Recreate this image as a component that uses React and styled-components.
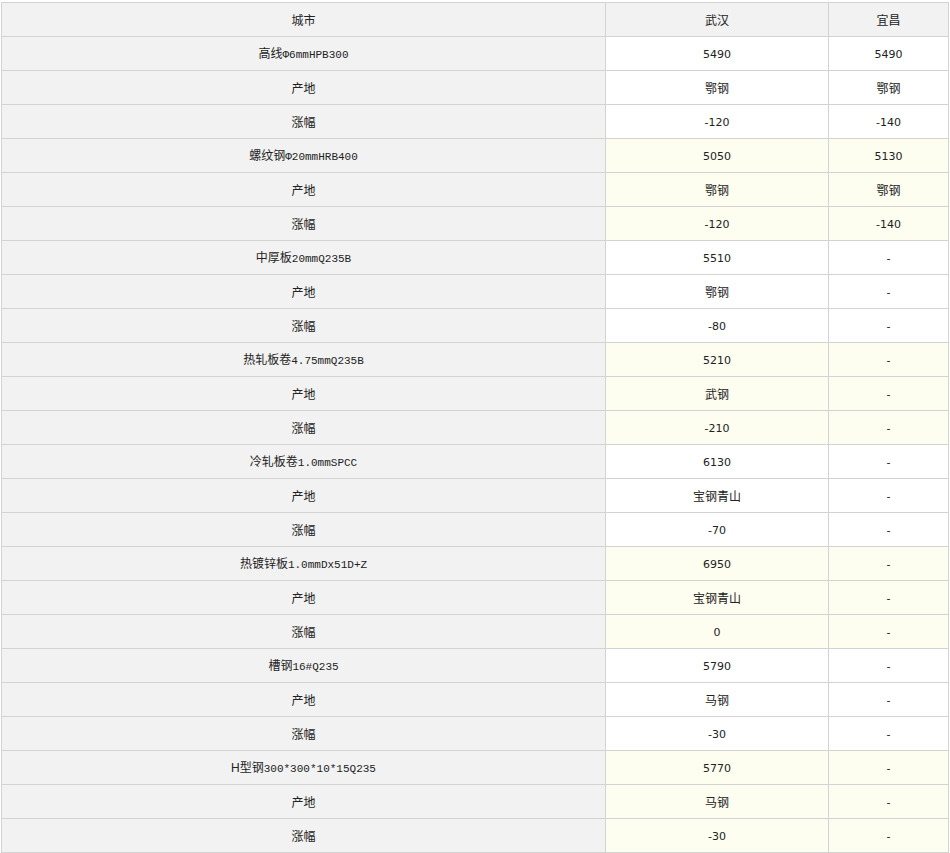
import React from "react";
import styled, { createGlobalStyle } from "styled-components";

const GROUPS = [
  { name: "高线", spec: "Φ6mmHPB300", price: ["5490", "5490"], origin: ["鄂钢", "鄂钢"], change: ["-120", "-140"] },
  { name: "螺纹钢", spec: "Φ20mmHRB400", price: ["5050", "5130"], origin: ["鄂钢", "鄂钢"], change: ["-120", "-140"] },
  { name: "中厚板", spec: "20mmQ235B", price: ["5510", "-"], origin: ["鄂钢", "-"], change: ["-80", "-"] },
  { name: "热轧板卷", spec: "4.75mmQ235B", price: ["5210", "-"], origin: ["武钢", "-"], change: ["-210", "-"] },
  { name: "冷轧板卷", spec: "1.0mmSPCC", price: ["6130", "-"], origin: ["宝钢青山", "-"], change: ["-70", "-"] },
  { name: "热镀锌板", spec: "1.0mmDx51D+Z", price: ["6950", "-"], origin: ["宝钢青山", "-"], change: ["0", "-"] },
  { name: "槽钢", spec: "16#Q235", price: ["5790", "-"], origin: ["马钢", "-"], change: ["-30", "-"] },
  { name: "H型钢", spec: "300*300*10*15Q235", price: ["5770", "-"], origin: ["马钢", "-"], change: ["-30", "-"] }
];

const GlobalStyle = createGlobalStyle`
  body {
    margin: 0;
    padding: 2px 0 0 1px;
    background: #fff;
    font-family: "Liberation Sans", "Noto Sans CJK SC", sans-serif;
    color: #222;
  }
`;

const Table = styled.table`
  border-collapse: collapse;
  width: 947px;
  table-layout: fixed;
  font-size: 12px;
`;

const Cell = styled.td`
  height: 31px;
  padding: 2px 0 0;
  border: 1px solid #d3d3d3;
  text-align: center;
  vertical-align: middle;
  line-height: 14px;
  background: ${(p) => (p.$tint ? "#fdfdf0" : "#fff")};
`;

const HeadCell = styled(Cell).attrs({ as: "th" })`
  font-weight: normal;
  background: #f2f2f2;
`;

const LabelCell = styled(Cell)`
  background: #f2f2f2;
`;

const Spec = styled.span`
  font-family: "Liberation Mono", "DejaVu Sans Mono", monospace;
  font-size: 11px;
`;

const Value = styled.span`
  font-family: ${(p) => (p.$num ? '"DejaVu Sans", sans-serif' : '"Noto Sans CJK SC", sans-serif')};
  font-size: ${(p) => (p.$num ? "11px" : "12px")};
`;

function Group({ group, tint }) {
  const rows = [
    [
      <>
        {group.name}
        <Spec>{group.spec}</Spec>
      </>,
      group.price
    ],
    ["产地", group.origin],
    ["涨幅", group.change]
  ];
  return rows.map(([label, values], i) => (
    <tr key={i}>
      <LabelCell>{label}</LabelCell>
      {values.map((v, j) => (
        <Cell key={j} $tint={tint}>
          <Value $num={/^[-\d]/.test(v)}>{v}</Value>
        </Cell>
      ))}
    </tr>
  ));
}

export default function App() {
  return (
    <>
      <GlobalStyle />
      <Table>
        <colgroup>
          <col style={{ width: 604 }} />
          <col style={{ width: 223 }} />
          <col style={{ width: 120 }} />
        </colgroup>
        <thead>
          <tr>
            <HeadCell>城市</HeadCell>
            <HeadCell>武汉</HeadCell>
            <HeadCell>宜昌</HeadCell>
          </tr>
        </thead>
        <tbody>
          {GROUPS.map((g, i) => (
            <Group key={g.name} group={g} tint={i % 2 === 1} />
          ))}
        </tbody>
      </Table>
    </>
  );
}
